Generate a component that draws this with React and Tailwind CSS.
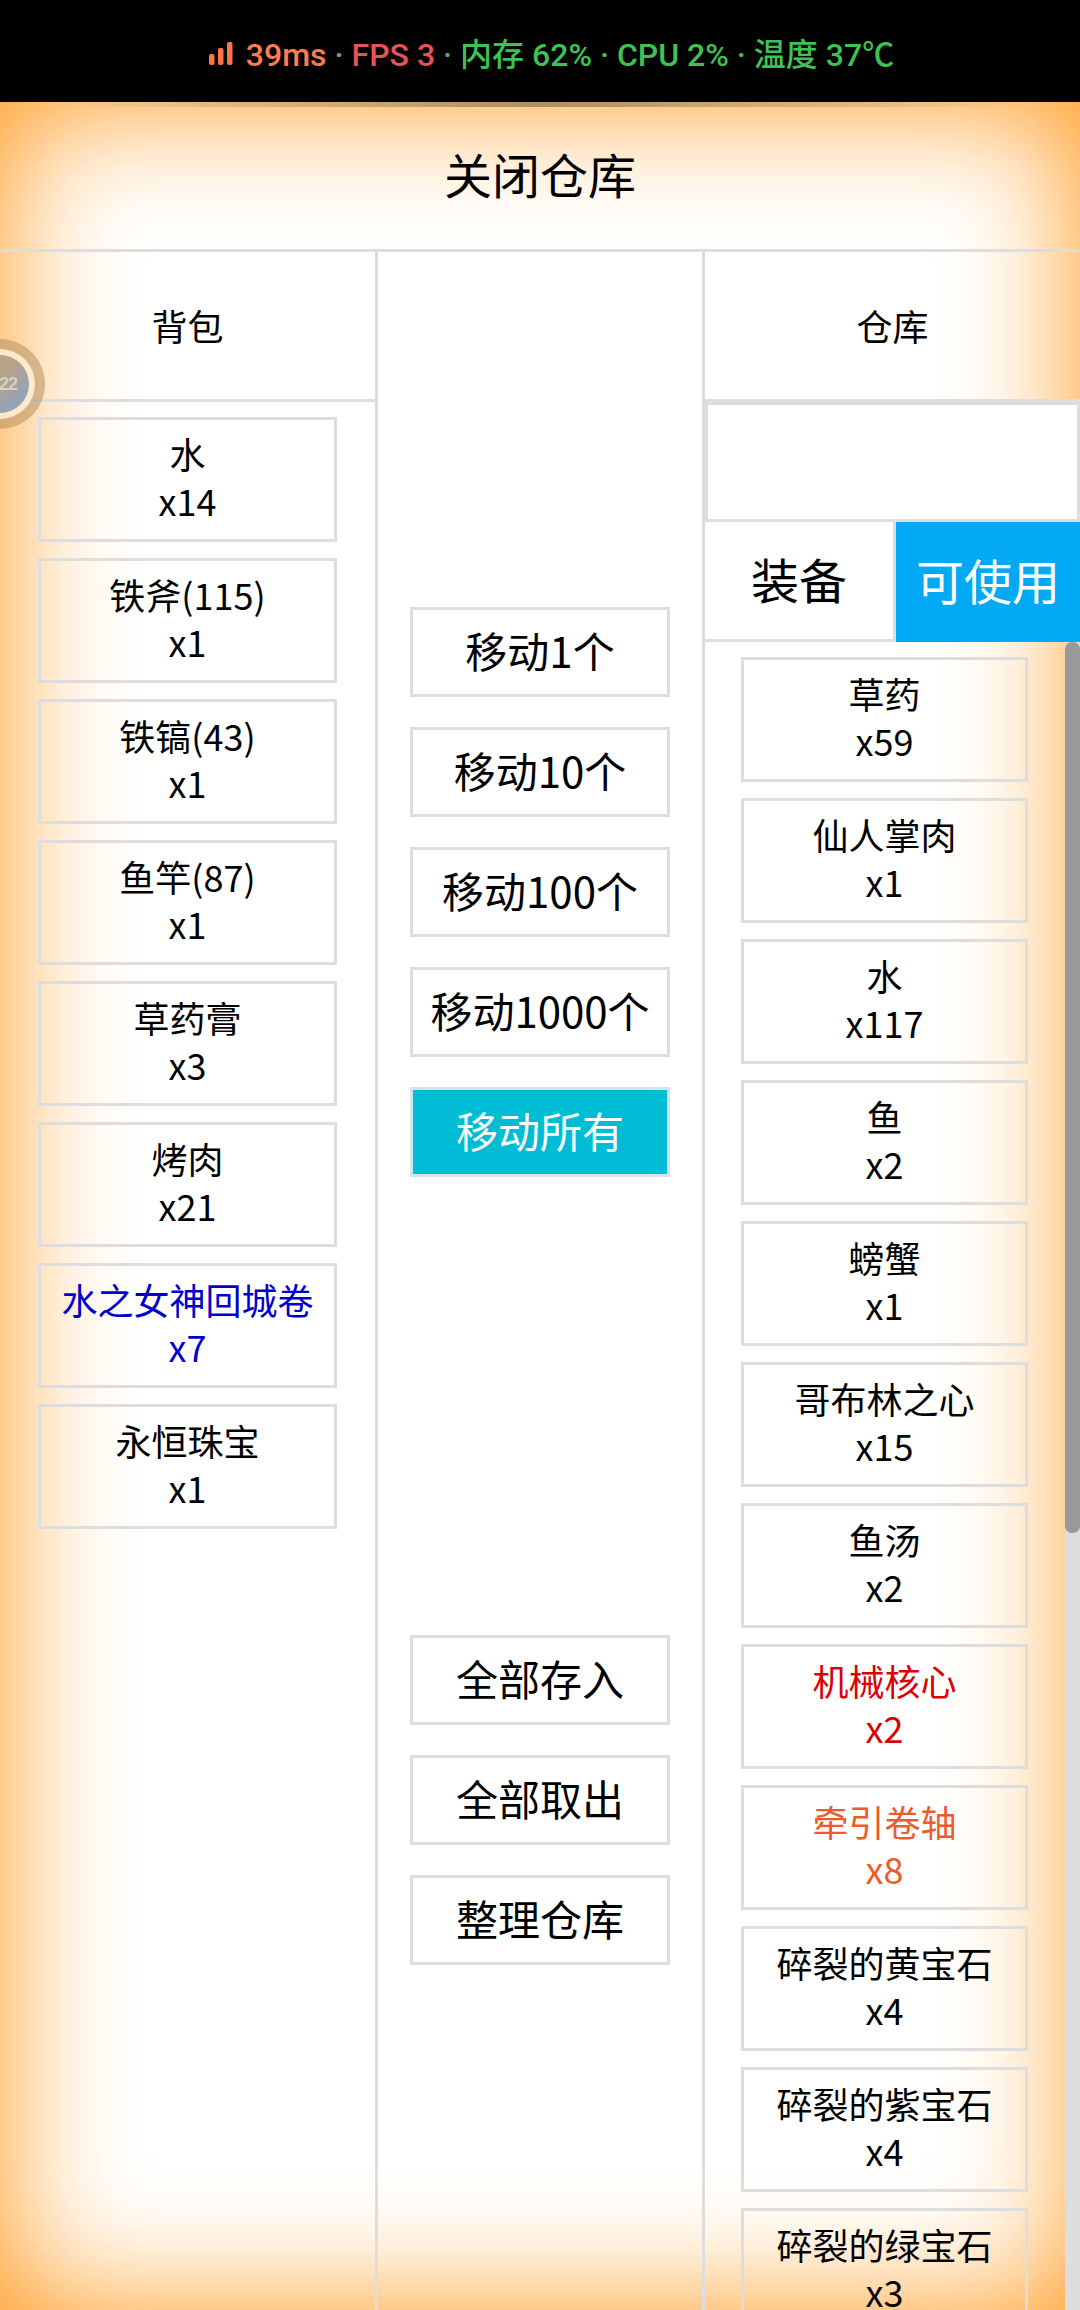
const bagItems = [
    { name: '水', count: 14 },
    { name: '铁斧(115)', count: 1 },
    { name: '铁镐(43)', count: 1 },
    { name: '鱼竿(87)', count: 1 },
    { name: '草药膏', count: 3 },
    { name: '烤肉', count: 21 },
    { name: '水之女神回城卷', count: 7, color: 'text-[#0000cc]' },
    { name: '永恒珠宝', count: 1 },
];

const storeItems = [
    { name: '草药', count: 59 },
    { name: '仙人掌肉', count: 1 },
    { name: '水', count: 117 },
    { name: '鱼', count: 2 },
    { name: '螃蟹', count: 1 },
    { name: '哥布林之心', count: 15 },
    { name: '鱼汤', count: 2 },
    { name: '机械核心', count: 2, color: 'text-[#dd0000]' },
    { name: '牵引卷轴', count: 8, color: 'text-[#ee5a2a]' },
    { name: '碎裂的黄宝石', count: 4 },
    { name: '碎裂的紫宝石', count: 4 },
    { name: '碎裂的绿宝石', count: 3 },
];

const moveButtons = ['移动1个', '移动10个', '移动100个', '移动1000个'];
const bulkButtons = ['全部存入', '全部取出', '整理仓库'];

function Item({ item }) {
    return (
        <div className={`h-[125px] shrink-0 border-[3px] border-[#ddd] pb-[5px] flex flex-col items-center justify-center text-[36px] leading-[47px] ${item.color || 'text-black'}`}>
            <div>{item.name}</div>
            <div>x{item.count}</div>
        </div>
    );
}

function ActionButton({ label, active }) {
    return (
        <div className={`w-[260px] h-[90px] border-[3px] pb-[5px] flex items-center justify-center text-[42px] ${active ? 'bg-[#00bcd4] border-[#d3e4ea] text-white' : 'border-[#ddd] text-black'}`}>
            {label}
        </div>
    );
}

function ColumnHead({ label }) {
    return (
        <div className="h-[150px] shrink-0 border-b-[3px] border-[#ddd] pb-[2px] flex items-center justify-center text-[36px]">
            {label}
        </div>
    );
}

function StatusBar() {
    return (
        <div className="h-[102px] bg-black pt-[8px] pl-[23px] flex items-center justify-center gap-[13px] text-[32px] font-medium font-['Roboto','Noto_Sans_CJK_SC',sans-serif] whitespace-pre">
            <svg width="24" height="23" viewBox="0 0 24 23" className="-mt-[3px]">
                <rect x="0" y="12" width="5.5" height="11" rx="2" fill="#ff7448" />
                <rect x="9" y="6" width="5.5" height="17" rx="2" fill="#ff7448" />
                <rect x="18" y="0" width="5.5" height="23" rx="2" fill="#ff7448" />
            </svg>
            <div>
                <span className="text-[#ff7c50]">39ms</span>
                <span className="text-[#9a8f8c]"> · </span>
                <span className="text-[#e5525a]">FPS 3</span>
                <span className="text-[#6f9a78]"> · </span>
                <span className="text-[#3ec253]">内存 62% · CPU 2% · 温度 37℃</span>
            </div>
        </div>
    );
}

function FloatingBall() {
    return (
        <div className="absolute left-[-45px] top-[339px] w-[90px] h-[90px] rounded-full bg-[#b08a5a]/50 flex items-center justify-center">
            <div className="w-[70px] h-[70px] rounded-full bg-[#ffe9cc] flex items-center justify-center">
                <div className="w-[58px] h-[58px] rounded-full bg-[linear-gradient(135deg,#b8a488_40%,#94a2b4_80%)] flex items-center justify-end pr-[12px] text-[#dccfbb] text-[18px] font-bold tracking-[-1px] leading-none font-['Liberation_Sans',sans-serif]">
                    22
                </div>
            </div>
        </div>
    );
}

export default function App() {
    return (
        <div className="relative w-full h-[2310px] overflow-hidden bg-white text-black font-['Noto_Sans_CJK_SC','Noto_Sans',sans-serif]">
            <StatusBar />
            <div className="h-[2208px] flex flex-col shadow-[inset_0_0_130px_#ff9412]">
                <div className="h-[5px] shrink-0 bg-[linear-gradient(90deg,transparent_5%,#b38d5c_50%,transparent_95%)]" />
                <div className="h-[145px] shrink-0 border-b-[3px] border-[#ddd] pb-[10px] flex items-center justify-center text-[48px]">
                    关闭仓库
                </div>
                <div className="flex-1 min-h-0 flex">
                    <div className="w-[375px] shrink-0 flex flex-col">
                        <ColumnHead label="背包" />
                        <div className="px-[38px] pt-[15px] flex flex-col gap-[16px]">
                            {bagItems.map(item => <Item key={item.name} item={item} />)}
                        </div>
                    </div>

                    <div className="w-[330px] shrink-0 border-x-[3px] border-[#ddd] pt-[355px] flex flex-col items-center">
                        <div className="flex flex-col gap-[30px]">
                            {moveButtons.map(label => <ActionButton key={label} label={label} />)}
                            <ActionButton label="移动所有" active />
                        </div>
                        <div className="mt-[458px] flex flex-col gap-[30px]">
                            {bulkButtons.map(label => <ActionButton key={label} label={label} />)}
                        </div>
                    </div>

                    <div className="flex-1 min-w-0 flex flex-col">
                        <ColumnHead label="仓库" />
                        <div className="h-[120px] shrink-0 bg-white border-[3px] border-[#ddd]" />
                        <div className="h-[120px] shrink-0 flex bg-white">
                            <div className="w-[191px] border-r-[3px] border-b-[3px] border-[#ddd] pb-[5px] flex items-center justify-center text-[48px]">
                                装备
                            </div>
                            <div className="flex-1 bg-[#03a9f4] text-white pb-[6px] flex items-center justify-center text-[48px]">
                                可使用
                            </div>
                        </div>
                        <div className="flex-1 min-h-0 flex">
                            <div className="flex-1 min-w-0 pl-[36px] pr-[37px] pt-[15px] flex flex-col gap-[16px] overflow-hidden">
                                {storeItems.map(item => <Item key={item.name} item={item} />)}
                            </div>
                            <div className="w-[15px] shrink-0 bg-[#ddd]">
                                <div className="h-[891px] bg-[#999] rounded-[7px]" />
                            </div>
                        </div>
                    </div>
                </div>
            </div>
            <FloatingBall />
        </div>
    );
}
